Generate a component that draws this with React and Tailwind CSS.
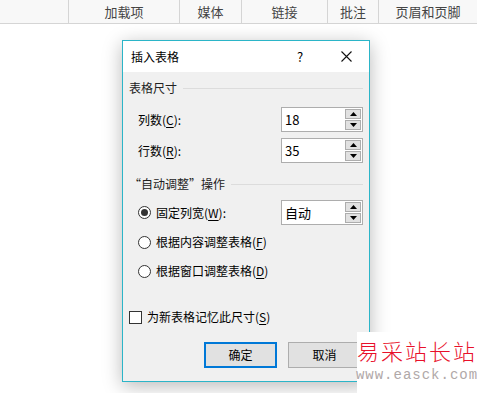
import React from 'react';

const font = { fontFamily: '"Microsoft YaHei UI", "Noto Sans CJK SC", sans-serif' };

const tabs = [
  { label: '加载项', w: 111 },
  { label: '媒体', w: 62 },
  { label: '链接', w: 86 },
  { label: '批注', w: 51 },
  { label: '页眉和页脚', w: 99 },
];

const Arrow = ({ up }) => (
  <svg width="7" height="4" viewBox="0 0 7 4">
    <path d={up ? 'M0 4 L3.5 0 L7 4 Z' : 'M0 0 L3.5 4 L7 0 Z'} fill="#000" />
  </svg>
);

const Spinner = ({ value }) => (
  <div className="flex h-[25px] w-[82px] items-stretch border border-[#adadad] bg-white">
    <div className="flex flex-1 items-center pl-[3px] text-[13px] text-black">{value}</div>
    <div className="flex flex-col gap-[1px] py-[1px] pr-[1px]">
      <div className="flex h-[10px] w-[16px] items-center justify-center border border-[#adadad] bg-[#e1e1e1]">
        <Arrow up />
      </div>
      <div className="flex h-[10px] w-[16px] items-center justify-center border border-[#adadad] bg-[#e1e1e1]">
        <Arrow />
      </div>
    </div>
  </div>
);

const Group = ({ title }) => (
  <div className="flex h-[16px] items-center gap-[6px] text-[12px] text-[#222]">
    <span>{title}</span>
    <div className="h-px flex-1 bg-[#dcdcdc]" />
  </div>
);

const Radio = ({ checked, children }) => (
  <div className="flex h-[16px] items-center gap-[5px] text-[12px] text-black">
    <div className="flex h-[13px] w-[13px] items-center justify-center rounded-full border border-[#333] bg-white">
      {checked && <div className="h-[7px] w-[7px] rounded-full bg-[#333]" />}
    </div>
    <span>{children}</span>
  </div>
);

const Key = ({ k }) => <span className="underline underline-offset-2">{k}</span>;

export default function App() {
  return (
    <div className="relative h-[393px] w-[477px] overflow-hidden bg-white" style={font}>
      <div className="flex h-[24px] border-b border-[#d5d5d5] bg-[#f8f8f8] pl-[68px]">
        {tabs.map((t) => (
          <div
            key={t.label}
            className="flex items-center justify-center border-l border-[#d5d5d5] text-[13px] text-[#444]"
            style={{ width: t.w }}
          >
            {t.label}
          </div>
        ))}
      </div>

      <div className="ml-[122px] mt-[16px] w-[248px] border border-[#2bb5c8] bg-[#f0f0f0] shadow-[0_4px_18px_rgba(0,0,0,0.28)]">
        <div className="flex h-[31px] items-center bg-white pl-[8px] text-[12px] text-black">
          <span className="flex-1">插入表格</span>
          <span className="w-[46px] text-center text-[13px]">?</span>
          <span className="flex w-[46px] justify-center">
            <svg width="11" height="11" viewBox="0 0 11 11">
              <path d="M0.5 0.5 L10.5 10.5 M10.5 0.5 L0.5 10.5" stroke="#111" strokeWidth="1.1" />
            </svg>
          </span>
        </div>

        <div className="flex flex-col pl-[6px] pr-[6px] pt-[8px] pb-[13px]">
          <Group title="表格尺寸" />
          <div className="mt-[11px] flex items-center pl-[9px]">
            <span className="flex-1 text-[12px]">列数(<Key k="C" />):</span>
            <Spinner value="18" />
          </div>
          <div className="mt-[6px] flex items-center pl-[9px]">
            <span className="flex-1 text-[12px]">行数(<Key k="R" />):</span>
            <Spinner value="35" />
          </div>

          <div className="mt-[13px]">
            <Group title="“自动调整”操作" />
          </div>
          <div className="mt-[8px] flex items-center pl-[9px]">
            <div className="flex-1">
              <Radio checked>固定列宽(<Key k="W" />):</Radio>
            </div>
            <Spinner value="自动" />
          </div>
          <div className="mt-[9px] pl-[9px]">
            <Radio>根据内容调整表格(<Key k="F" />)</Radio>
          </div>
          <div className="mt-[13px] pl-[9px]">
            <Radio>根据窗口调整表格(<Key k="D" />)</Radio>
          </div>

          <div className="mt-[30px] flex h-[16px] items-center gap-[5px] text-[12px]">
            <div className="h-[13px] w-[13px] border border-[#333] bg-white" />
            <span>为新表格记忆此尺寸(<Key k="S" />)</span>
          </div>

          <div className="mt-[17px] mr-[2px] flex justify-end gap-[11px]">
            <div className="flex h-[26px] w-[73px] items-center justify-center border-2 border-[#0078d7] bg-[#e1e1e1] text-[12px]">
              确定
            </div>
            <div className="flex h-[26px] w-[73px] items-center justify-center border border-[#adadad] bg-[#e1e1e1] text-[12px]">
              取消
            </div>
          </div>
        </div>
      </div>

      <div className="absolute left-[357px] top-[332px] flex h-[61px] w-[120px] flex-col items-center bg-white pt-[5px]">
        <div className="text-[22px] font-light leading-[26px] tracking-[2px] text-[#e8102a]" style={{ fontFamily: '"Noto Sans CJK SC", serif' }}>
          易采站长站
        </div>
        <div className="mt-[4px] text-[14px] leading-[16px] tracking-[1px] text-[#b0a8a8]" style={{ fontFamily: '"Liberation Mono", monospace' }}>
          www.easck.com
        </div>
      </div>
    </div>
  );
}
